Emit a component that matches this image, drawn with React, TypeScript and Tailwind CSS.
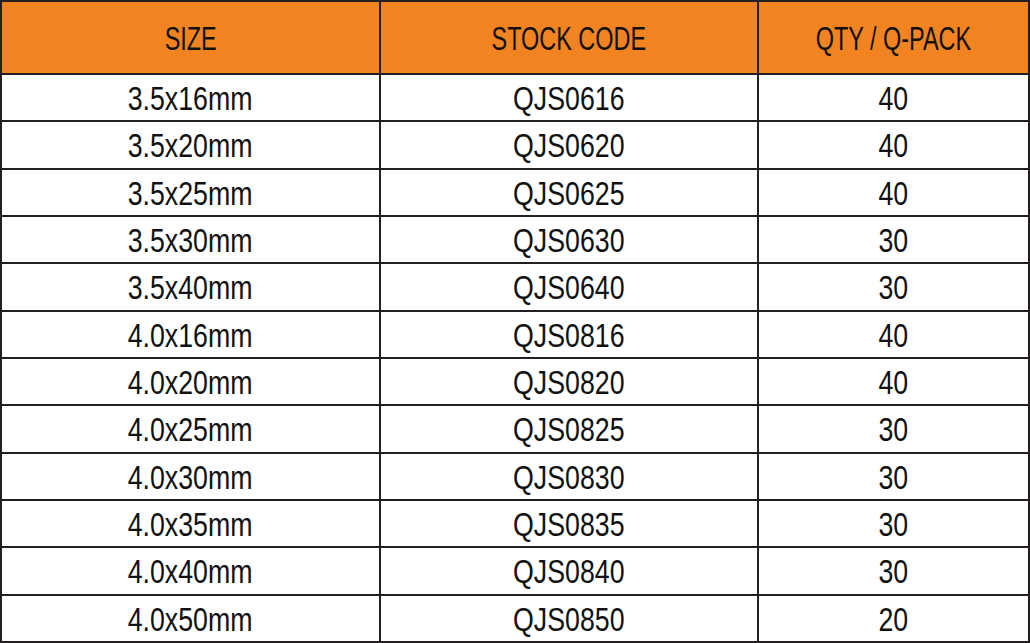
import React from 'react';

const rows: [string, string, string][] = [
  ['3.5x16mm', 'QJS0616', '40'],
  ['3.5x20mm', 'QJS0620', '40'],
  ['3.5x25mm', 'QJS0625', '40'],
  ['3.5x30mm', 'QJS0630', '30'],
  ['3.5x40mm', 'QJS0640', '30'],
  ['4.0x16mm', 'QJS0816', '40'],
  ['4.0x20mm', 'QJS0820', '40'],
  ['4.0x25mm', 'QJS0825', '30'],
  ['4.0x30mm', 'QJS0830', '30'],
  ['4.0x35mm', 'QJS0835', '30'],
  ['4.0x40mm', 'QJS0840', '30'],
  ['4.0x50mm', 'QJS0850', '20'],
];

const headers = ['SIZE', 'STOCK CODE', 'QTY / Q-PACK'];

// no narrow face installed, so squeeze the regular one to a condensed width
const Cell: React.FC<{ text: string; head?: boolean }> = ({ text, head }) => (
  <div className={`flex items-center justify-center pt-[2px] ${head ? 'bg-[#f18421]' : 'bg-white'}`}>
    <span className={`inline-block whitespace-nowrap ${head ? 'scale-x-[0.71]' : 'scale-x-[0.81]'}`}>{text}</span>
  </div>
);

const App: React.FC = () => {
  return (
    <div className="w-[1030px] h-[643px] bg-white">
      <div className="grid h-full w-full grid-cols-[377px_376px_1fr] grid-rows-[71px_repeat(12,1fr)] gap-[2px] bg-[#231f20] p-[2px] font-['Liberation_Sans',sans-serif] text-[33px] leading-none text-[#111]">
        {headers.map((h) => (
          <Cell key={h} text={h} head />
        ))}
        {rows.map((r) => r.map((cell, i) => <Cell key={`${r[1]}-${i}`} text={cell} />))}
      </div>
    </div>
  );
};

export default App;
